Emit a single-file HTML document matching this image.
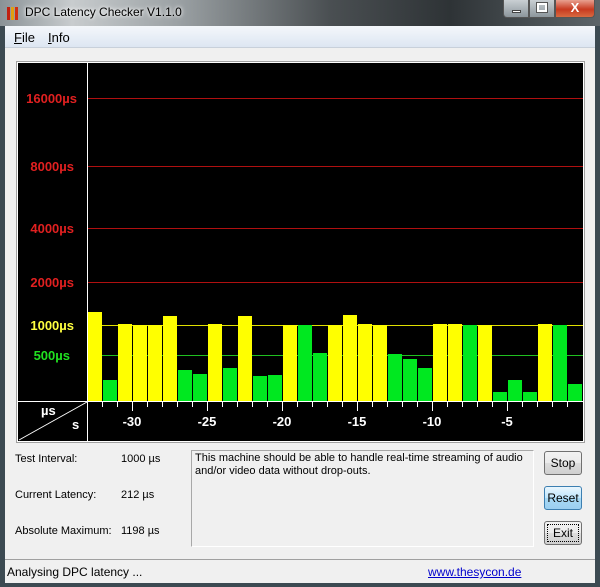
<!DOCTYPE html>
<html><head><meta charset="utf-8"><style>
*{margin:0;padding:0;box-sizing:border-box}
body{width:600px;height:587px;overflow:hidden;background:#3c4a52;font-family:"Liberation Sans",sans-serif;position:relative}
.abs{position:absolute}
#title{left:0;top:0;width:600px;height:26px;background:linear-gradient(90deg,#8a9296 0%,#c8ccce 12%,#9aa0a3 30%,#4a4f52 55%,#2e3336 75%,#5d6569 100%)}
#client{left:5px;top:26px;width:590px;height:557px;background:#f0f0f0}
#menu{left:5px;top:26px;width:590px;height:22px;background:linear-gradient(#f4f7fb,#dde6f2);border-bottom:1px solid #c8d0da;font-size:13px}
.lbl{font-size:11px;color:#000}
.btn{width:38px;height:24px;border:1px solid #707070;border-radius:3px;background:linear-gradient(#f2f2f2 0%,#ebebeb 50%,#dddddd 51%,#cfcfcf 100%);font-size:12px;text-align:center;line-height:22px}
</style></head><body>
<div id="title" class="abs"></div>
<div class="abs" style="left:7px;top:7px;width:3px;height:13px;background:#c02010"></div>
<div class="abs" style="left:11px;top:7px;width:3px;height:13px;background:#e0a010"></div>
<div class="abs" style="left:15px;top:7px;width:3px;height:13px;background:#d03010"></div>
<div class="abs" style="left:25px;top:5px;font-size:12px;color:#000;text-shadow:0 0 6px #fff,0 0 3px #fff">DPC Latency Checker V1.1.0</div>
<div class="abs" style="left:503px;top:0;width:26px;height:18px;border:1px solid #555;border-top:none;border-radius:0 0 0 4px;background:linear-gradient(#c9cfd3,#8c969c)"><div class="abs" style="left:8px;top:10px;width:9px;height:3px;background:#fff;border:1px solid #444"></div></div>
<div class="abs" style="left:529px;top:0;width:26px;height:18px;border:1px solid #555;border-top:none;background:linear-gradient(#c9cfd3,#8c969c)"><div class="abs" style="left:7px;top:3px;width:10px;height:9px;border:2px solid #fff;outline:1px solid #555"></div></div>
<div class="abs" style="left:555px;top:0;width:40px;height:18px;border:1px solid #555;border-top:none;border-radius:0 0 4px 0;background:linear-gradient(#e8a090,#c83a20 55%,#d86a40);color:#fff;font-weight:bold;font-size:13px;text-align:center;line-height:16px">X</div>
<div id="client" class="abs"></div>
<div id="menu" class="abs"><span class="abs" style="left:9px;top:4px"><u>F</u>ile</span><span class="abs" style="left:43px;top:4px"><u>I</u>nfo</span></div>
<svg class="abs" style="left:0;top:0" width="600" height="587">
<rect x="16.5" y="61.5" width="568" height="381" fill="#fff" stroke="#a0a0a0"/>
<rect x="18" y="63" width="565" height="378" fill="#000"/>
<g stroke-width="1">
<line x1="88" x2="583" y1="98.5" y2="98.5" stroke="#b01010"/>
<line x1="88" x2="583" y1="166.5" y2="166.5" stroke="#b01010"/>
<line x1="88" x2="583" y1="228.5" y2="228.5" stroke="#b01010"/>
<line x1="88" x2="583" y1="282.5" y2="282.5" stroke="#b01010"/>
<line x1="88" x2="583" y1="325.5" y2="325.5" stroke="#e0e000"/>
<line x1="88" x2="583" y1="355.5" y2="355.5" stroke="#20c020"/>
</g>
<g font-family="Liberation Sans" font-weight="bold" font-size="13" text-anchor="end">
<text x="77" y="103" fill="#e02020">16000µs</text>
<text x="74" y="171" fill="#e02020">8000µs</text>
<text x="74" y="233" fill="#e02020">4000µs</text>
<text x="74" y="287" fill="#e02020">2000µs</text>
<text x="74" y="330" fill="#ffff40">1000µs</text>
<text x="70" y="360" fill="#20e020">500µs</text>
</g>
<g id="bars"></g>
<line x1="87.5" x2="87.5" y1="63" y2="441" stroke="#fff"/>
<line x1="18" x2="583" y1="401.5" y2="401.5" stroke="#fff"/>
<line x1="19" y1="440" x2="87" y2="402" stroke="#fff"/>
<text x="41" y="415" fill="#fff" font-weight="bold" font-size="13" font-family="Liberation Sans">µs</text>
<text x="72" y="429" fill="#fff" font-weight="bold" font-size="13" font-family="Liberation Sans">s</text>
<g id="ticks" stroke="#fff"></g>
<g fill="#fff" font-weight="bold" font-size="13" font-family="Liberation Sans" text-anchor="middle">
<text x="132" y="426">-30</text><text x="207" y="426">-25</text><text x="282" y="426">-20</text>
<text x="357" y="426">-15</text><text x="432" y="426">-10</text><text x="507" y="426">-5</text>
</g>
</svg>
<div class="abs lbl" style="left:15px;top:453px">Test Interval:</div>
<div class="abs lbl" style="left:121px;top:453px">1000 µs</div>
<div class="abs lbl" style="left:15px;top:489px">Current Latency:</div>
<div class="abs lbl" style="left:121px;top:489px">212 µs</div>
<div class="abs lbl" style="left:15px;top:525px">Absolute Maximum:</div>
<div class="abs lbl" style="left:121px;top:525px">1198 µs</div>
<div class="abs lbl" style="left:191px;top:450px;width:343px;height:97px;border:1px solid #a8a8a8;border-right-color:#fff;border-bottom-color:#fff;padding:1px 3px;line-height:13px">This machine should be able to handle real-time streaming of audio and/or video data without drop-outs.</div>
<div class="abs btn" style="left:544px;top:451px">Stop</div>
<div class="abs btn" style="left:544px;top:486px;border-color:#3c7fb1;background:linear-gradient(#eaf6fd,#bee6fd 50%,#a7d9f5 51%,#9ccff0)">Reset</div>
<div class="abs btn" style="left:544px;top:521px;outline:1px dotted #000;outline-offset:-4px">Exit</div>
<div class="abs" style="left:5px;top:559px;width:590px;height:24px;background:#f0f0f0;border-top:1px solid #a0a0a0;font-size:12px">
<span class="abs" style="left:2px;top:5px">Analysing DPC latency ...</span>
<span class="abs" style="left:423px;top:5px;color:#0000cc;text-decoration:underline">www.thesycon.de</span>
</div>
<script>
var d=[["Y",312],["G",380],["Y",324],["Y",325],["Y",325],["Y",316],["G",370],["G",374],["Y",324],["G",368],["Y",316],["G",376],["G",375],["Y",325],["G",325],["G",353],["Y",325],["Y",315],["Y",324],["Y",325],["G",354],["G",359],["G",368],["Y",324],["Y",324],["G",325],["Y",325],["G",392],["G",380],["G",392],["Y",324],["G",325],["G",384]];
var s="";d.forEach(function(b,i){s+='<rect x="'+(88+15*i)+'" y="'+b[1]+'" width="14" height="'+(401-b[1])+'" fill="'+(b[0]=="Y"?"#ffff00":"#00e820")+'"/>';});
document.getElementById("bars").innerHTML=s;
var t="";for(var k=0;k<32;k++){var x=102.5+15*k;var m=(k%5==2);t+='<line x1="'+x+'" x2="'+x+'" y1="402" y2="'+(m?411:407)+'"/>';}
document.getElementById("ticks").innerHTML=t;
</script>
</body></html>
